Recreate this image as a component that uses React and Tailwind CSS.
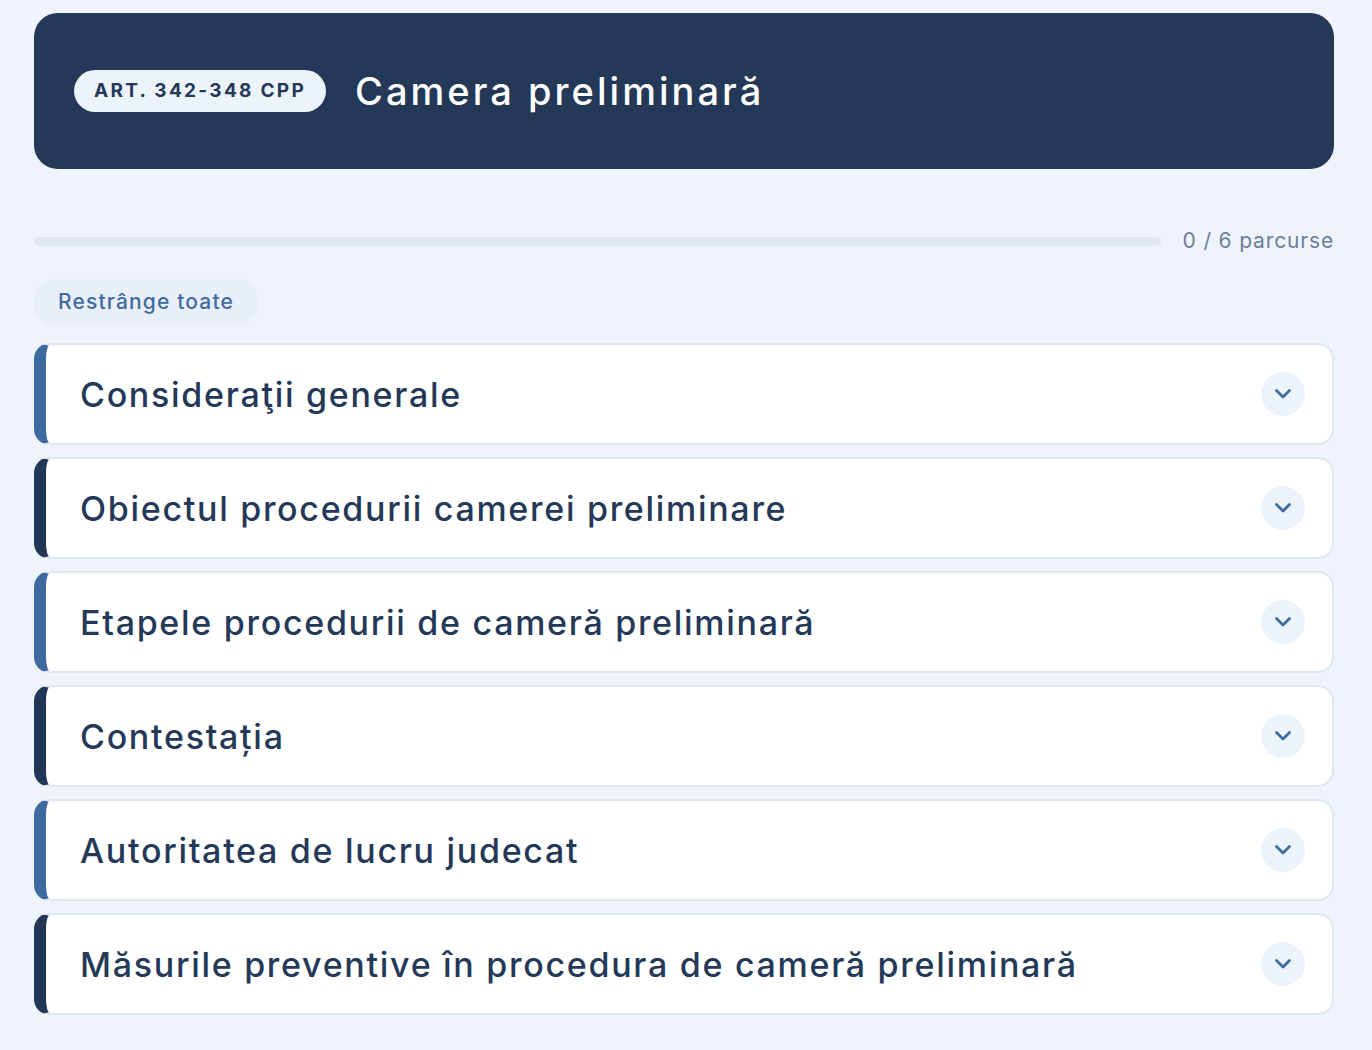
const sections = [
  { id: "consideratii", title: "Consideraţii generale", accent: "blue" },
  { id: "obiectul", title: "Obiectul procedurii camerei preliminare", accent: "navy" },
  { id: "etapele", title: "Etapele procedurii de cameră preliminară", accent: "blue" },
  { id: "contestatia", title: "Contestația", accent: "navy" },
  { id: "autoritatea", title: "Autoritatea de lucru judecat", accent: "blue" },
  { id: "masurile", title: "Măsurile preventive în procedura de cameră preliminară", accent: "navy" },
];

function Chevron() {
  return (
    <svg width="18" height="12" viewBox="0 0 18 12" fill="none">
      <path d="M2.5 2.5 L9 9 L15.5 2.5" stroke="currentColor" strokeWidth="2.8" strokeLinecap="round" strokeLinejoin="round" />
    </svg>
  );
}

function SectionCard({ title, accent }) {
  return (
    <button
      className={
        "w-full h-[102px] flex items-center justify-between pl-[34px] pr-[27px] bg-white text-left rounded-2xl border-2 border-l-[12px] border-[#dee6f1] " +
        (accent === "blue" ? "border-l-[#3e6aa0]" : "border-l-[#223656]")
      }
    >
      <span className="text-[34px] font-medium text-[#243858] tracking-[0.05em]">{title}</span>
      <span className="w-11 h-11 rounded-full bg-[#edf3fb] flex items-center justify-center text-[#3e6aa0]">
        <Chevron />
      </span>
    </button>
  );
}

export default function App() {
  return (
    <div
      className="min-h-screen bg-[#eff3fb] pl-[34px] pr-[38px] pt-[13px] pb-[33px]"
      style={{ fontFamily: "Inter, 'Noto Sans', sans-serif" }}
    >
      {/* Chapter header */}
      <div className="h-[156px] rounded-3xl bg-[#243858] flex items-center pl-10 gap-[29px]">
        <span className="h-[42px] px-5 rounded-full bg-[#edf3fb] text-[#243858] text-[19px] font-bold tracking-[0.12em] flex items-center">
          ART. 342-348 CPP
        </span>
        <h1 className="text-[38px] font-medium text-white tracking-[0.08em]">Camera preliminară</h1>
      </div>

      {/* Progress */}
      <div className="mt-[57px] h-[30px] flex items-center gap-[22px]">
        <div className="flex-1 h-[9px] rounded-full bg-[#e0e7f1]" />
        <span className="text-[21px] text-[#6b7f99] tracking-[0.04em]">0 / 6 parcurse</span>
      </div>

      <button className="mt-[23px] h-[46px] px-6 rounded-[20px] bg-[#e8eff9] text-[#3f6ba0] text-[21px] font-medium tracking-[0.055em]">
        Restrânge toate
      </button>

      <div className="mt-[18px] flex flex-col gap-3">
        {sections.map((s) => (
          <SectionCard key={s.id} title={s.title} accent={s.accent} />
        ))}
      </div>
    </div>
  );
}
